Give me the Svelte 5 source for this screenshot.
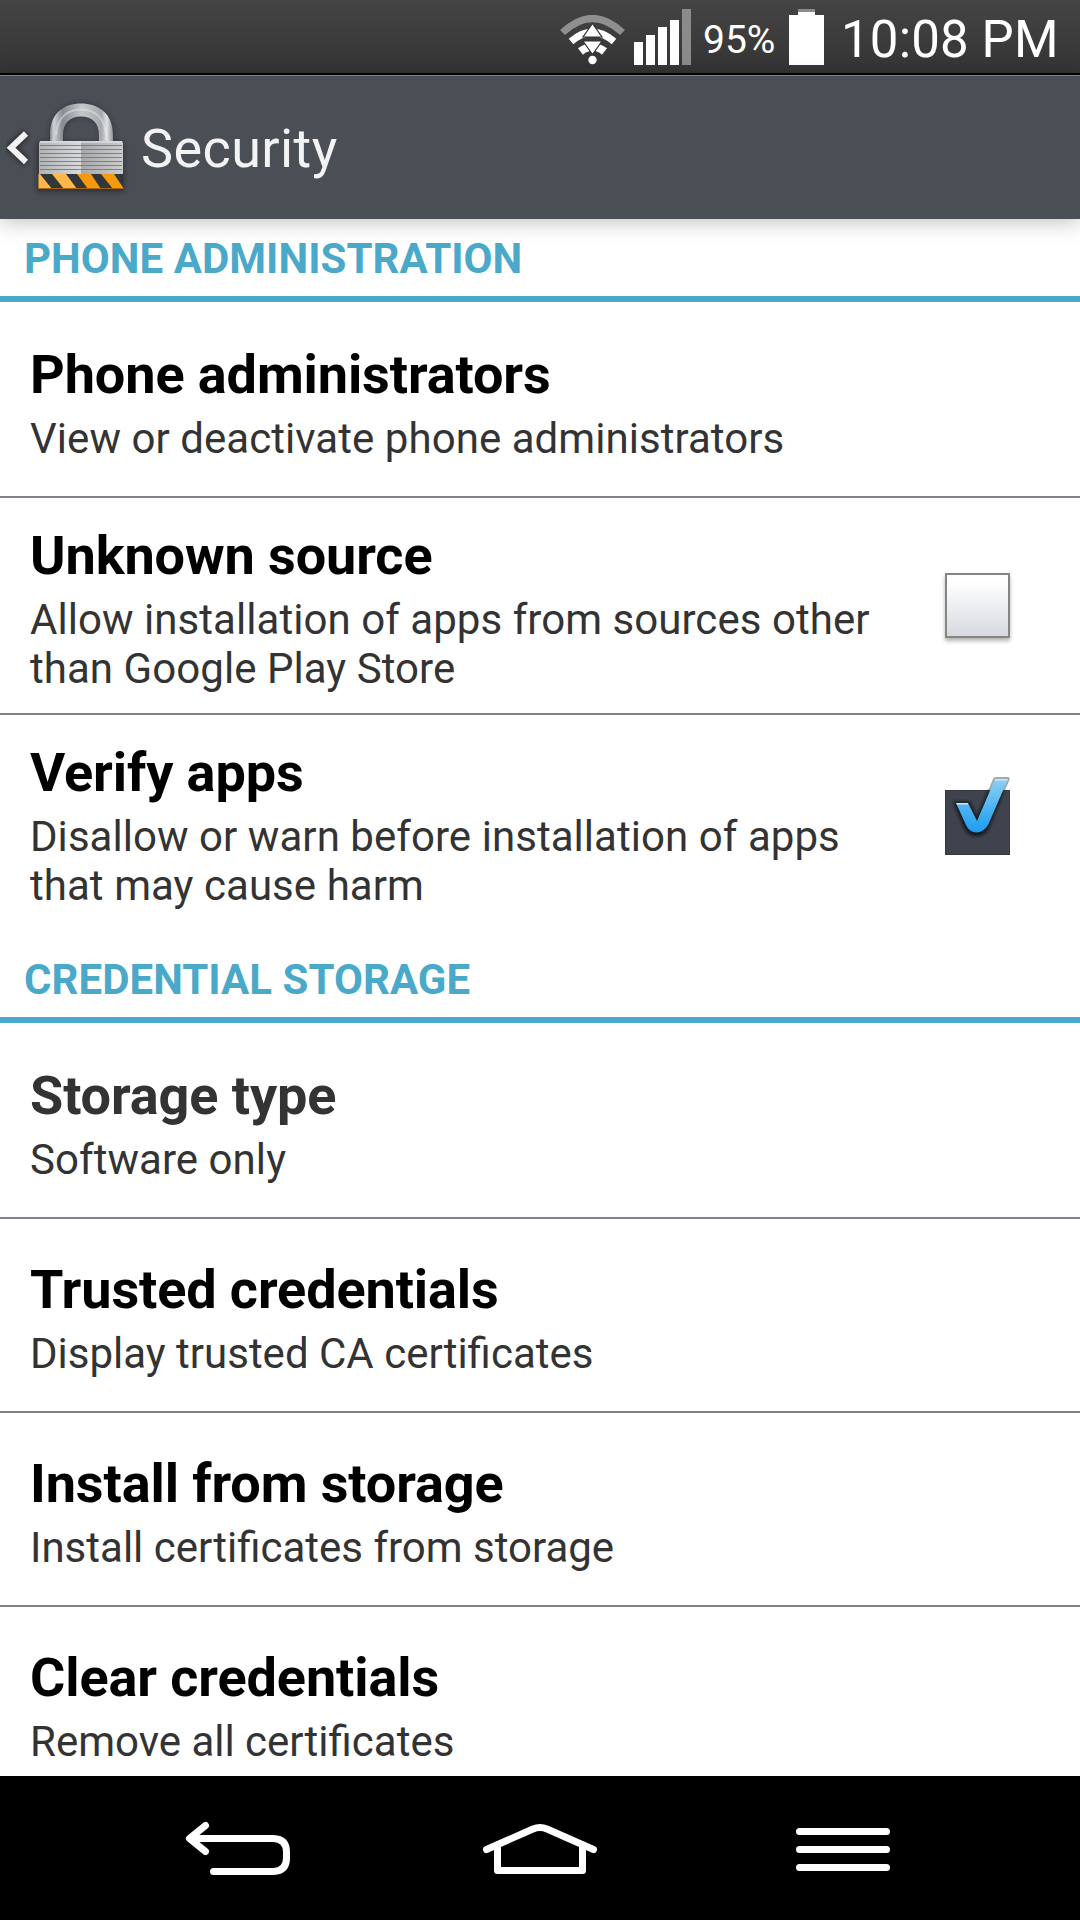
<script>
  const groups = [
    {
      heading: 'PHONE ADMINISTRATION',
      items: [
        { title: 'Phone administrators', lines: ['View or deactivate phone administrators'] },
        { title: 'Unknown source', lines: ['Allow installation of apps from sources other', 'than Google Play Store'], check: 'off' },
        { title: 'Verify apps', lines: ['Disallow or warn before installation of apps', 'that may cause harm'], check: 'on' }
      ]
    },
    {
      heading: 'CREDENTIAL STORAGE',
      items: [
        { title: 'Storage type', lines: ['Software only'], muted: true },
        { title: 'Trusted credentials', lines: ['Display trusted CA certificates'] },
        { title: 'Install from storage', lines: ['Install certificates from storage'] },
        { title: 'Clear credentials', lines: ['Remove all certificates'] }
      ]
    }
  ];

  // Letter-spacing switches ligatures off, so lines with "fi" keep the default spacing.
  const hasLigature = (line) => line.includes('fi');
</script>

<div class="screen">
  <div class="status">
    <svg class="wifi" width="66" height="50" viewBox="0 0 66 50" fill="none">
      <path d="M3.500 17.500Q33.500 -10.500 63.500 17.500" stroke="#8f8f8f" stroke-width="7" />
      <path d="M12 26.500Q33.500 8 55 26.500" stroke="#fff" stroke-width="7" />
      <path d="M21.500 36.500Q33.500 27 45.500 36.500" stroke="#fff" stroke-width="8" />
      <path d="M33.500 8.500L43 22H24Z M24 26H43L33.500 39.500Z" fill="#fff" stroke="#333" stroke-width="1.200" />
      <path d="M26 24h15" stroke="#3b3b3b" stroke-width="3" />
      <circle cx="33.500" cy="45" r="4.200" fill="#fff" />
    </svg>
    <svg class="signal" width="57" height="56" viewBox="0 0 57 56" fill="#fff">
      <path d="M0 33h9v23H0zM12 26h9v30h-9zM24 18h9v38h-9zM36 11h9v45h-9z" />
      <path d="M48 0h9v56h-9z" fill="#8b8b8b" />
    </svg>
    <span class="percent">95%</span>
    <svg class="battery" width="35" height="56" viewBox="0 0 35 56">
      <path d="M9 0h17v3H9z" fill="#8b8b8b" />
      <path d="M9 3h17v3h9v50H0V6h9z" fill="#fff" />
    </svg>
    <span class="clock">10:08 PM</span>
  </div>

  <header>
    <svg width="130" height="144" viewBox="0 0 130 144">
      <defs>
        <linearGradient id="shackle" x1="0" x2="1">
          <stop offset="0" stop-color="#82878a" />
          <stop offset=".06" stop-color="#d0d3d6" />
          <stop offset=".14" stop-color="#a3a8ac" />
          <stop offset=".2" stop-color="#868b8f" />
          <stop offset=".5" stop-color="#c5c8cb" />
          <stop offset=".82" stop-color="#a5aaae" />
          <stop offset=".9" stop-color="#e2e4e6" />
          <stop offset="1" stop-color="#8d9296" />
        </linearGradient>
        <linearGradient id="bodyL" x1="0" x2="1"><stop offset="0" stop-color="#b1b2b4" /><stop offset="1" stop-color="#d9dadc" /></linearGradient>
        <linearGradient id="bodyR" x1="0" x2="1"><stop offset="0" stop-color="#a8a9ab" /><stop offset="1" stop-color="#cbccce" /></linearGradient>
        <clipPath id="band"><path d="M38.500 99H123.500v14.500H38.500z" /></clipPath>
        <filter id="soft" x="-30%" y="-30%" width="160%" height="160%"><feGaussianBlur stdDeviation="2" /></filter>
      </defs>
      <path d="M26 58.500L11 72.800L26 87" fill="none" stroke="#1e2024" stroke-width="9" opacity=".75" filter="url(#soft)" />
      <path d="M26 58.500L11 72.800L26 87" fill="none" stroke="#f3f3f3" stroke-width="6" />
      <path d="M37 67h87v50H37z" fill="#222" opacity=".6" filter="url(#soft)" />
      <path d="M56 68V60a25.500 25.500 0 0 1 51 0v8" fill="none" stroke="#25272b" stroke-width="15" opacity=".5" filter="url(#soft)" />
      <path d="M50 67V60C50 38 64 28.500 81 28.500S113 38 113 60V67H99V60C99 48 92 41.500 81 41.500S63 48 63 60V67Z" fill="url(#shackle)" />
      <path d="M56 60C57 43 67 34.500 81 34.500S105 43 106 60" fill="none" stroke="#e8eaec" stroke-width="2" opacity=".5" />
      <path d="M40 66h41v33H39V68z" fill="url(#bodyL)" />
      <path d="M81 66h41l1 2v31H81z" fill="url(#bodyR)" />
      <path d="M40 67h82" stroke="#dcddde" stroke-width="1.500" />
      <path d="M40 70.500h82M40 74.500h82M40 78.500h82M40 82.500h82M40 86.500h82M40 90.500h82M40 94.500h82" stroke="#6d6f71" stroke-width="1" opacity=".8" />
      <path d="M38.500 99H123.500v15H38.500z" fill="#34373a" />
      <g clip-path="url(#band)">
        <path d="M38 99h2l12 15H38zM52 99h14l11 15H64z" fill="#ffb74a" />
        <path d="M77 99h14l10 15H88zM101 99h13l10 15h-11z" fill="#f59a0c" />
      </g>
      <path d="M38 113.500H123.500" stroke="#a8640c" stroke-width="1.200" />
    </svg>
    <h1>Security</h1>
  </header>

  <main>
    {#each groups as group}
      <section>
        <h2>{group.heading}</h2>
        {#each group.items as item}
          <div class="item" class:double={item.lines.length > 1}>
            <div class="text">
              <h3 class:muted={item.muted}>{item.title}</h3>
              {#each item.lines as line}<p class:loose={!hasLigature(line)}>{line}</p>{/each}
            </div>
            {#if item.check === 'off'}
              <span class="box"></span>
            {:else if item.check === 'on'}
              <svg class="checked" width="75" height="105" viewBox="0 0 75 105">
                <defs>
                  <linearGradient id="tick" x1="0" y1="0" x2="0" y2="1"><stop offset="0" stop-color="#8fd0f5" /><stop offset=".55" stop-color="#4bb3f1" /><stop offset="1" stop-color="#1d9df0" /></linearGradient>
                  <filter id="glow"><feGaussianBlur stdDeviation="1.500" /></filter>
                </defs>
                <path d="M5 20h65v65H5z" fill="#3e434e" />
                <path d="M5.500 20.500h64v64h-64z" fill="none" stroke="#343841" />
                <path d="M15 33H29L37 50L49 22H62L48 57Q44 65 36 65Q29 65 25 57Z" fill="#171a20" stroke="#171a20" stroke-width="3" filter="url(#glow)" />
                <path d="M48.500 20L53 9Q54 7 56 7H68.500Q70.500 8 69.500 10L65 20Z" fill="#a5a8aa" />
                <path d="M16 33H28L37 51L55 9H68L48.500 54Q44 62.500 36 62.500Q29 62 26 55Z" fill="url(#tick)" />
                <path d="M16.500 33.700H28M55 9.700H67.500" stroke="#cdeafa" stroke-width="1.500" />
              </svg>
            {/if}
          </div>
        {/each}
      </section>
    {/each}
  </main>

  <nav>
    <svg width="1080" height="144" viewBox="0 0 1080 144" fill="none" stroke="#fff" stroke-width="7" stroke-linecap="round" stroke-linejoin="round">
      <path d="M205.500 49.500L189.500 62.500L205.500 75.500M190 62.500H273.500Q286.500 63 286.500 76V82Q286.500 95 273.500 95.500H213.500" />
      <path d="M486.500 73.500L533 53Q540 50 547 53L593.500 73.500M497.500 70V94.500H582.500V70" />
      <path d="M799.500 55.500H886.500M799.500 73.500H886.500M799.500 91.500H886.500" />
    </svg>
  </nav>
</div>

<style>
  :global(body) { margin: 0; }
  .screen {
    width: 1080px; height: 1920px; overflow: hidden;
    display: flex; flex-direction: column;
    background: #fff; font-family: Roboto, sans-serif;
  }
  svg { display: block; flex: none; }
  h1, h2, h3, p { margin: 0; font-weight: 400; white-space: nowrap; }
  .status {
    height: 73px; flex: none; display: flex; align-items: flex-start;
    background: linear-gradient(#444, #343434); border-bottom: 2px solid #000; color: #fff;
  }
  .wifi { margin: 15px 0 0 559px; }
  .signal { margin: 9px 0 0 9px; }
  .percent { width: 76px; margin-left: 12px; font-size: 39px; line-height: 80px; white-space: nowrap; }
  .battery { margin: 9px 0 0 10px; }
  .clock { margin-left: 17px; font-size: 51px; line-height: 80px; letter-spacing: .15px; white-space: nowrap; }
  header {
    height: 144px; flex: none; box-sizing: border-box; display: flex;
    background: #4a4e55; box-shadow: inset 0 1px #7a7e85, 0 3px 20px rgba(0,0,0,.25);
    position: relative;
  }
  header svg { margin-right: 11px; }
  h1 { color: #f3f3f3; font-size: 54px; line-height: 148px; letter-spacing: .4px; }
  main { height: 1557px; flex: none; overflow: hidden; }
  h2 {
    box-sizing: border-box; height: 83px; padding-left: 24px; border-bottom: 6px solid #4aa9c9;
    color: #4aa9c9; font-size: 42px; font-weight: 700; line-height: 80px; letter-spacing: .05px;
  }
  .item {
    box-sizing: border-box; height: 194px; padding: 0 65px 0 30px; display: flex; align-items: center;
    justify-content: space-between; border-bottom: 2px solid #7d828a;
  }
  .text { align-self: flex-start; padding-top: 39px; }
  .item:nth-child(2) { height: 196px; }
  .item:nth-child(2) .text { padding-top: 41px; }
  .item.double { height: 217px; }
  .item.double .text { padding-top: 26px; }
  .item:last-child { border-bottom-color: transparent; margin-bottom: 8px; }
  h3 { color: #000; font-size: 54px; font-weight: 700; line-height: 63px; letter-spacing: -.1px; margin-bottom: 8px; }
  h3.muted { color: #333; }
  p { color: #333; font-size: 42px; line-height: 49px; }
  p.loose { letter-spacing: .05px; }
  .box {
    box-sizing: border-box; width: 65px; height: 65px; border: 2px solid #858585; margin-right: 5px;
    background: linear-gradient(#fff 10%, #d6dae0); box-shadow: 0 3px 4px rgba(0,0,0,.3);
  }
  nav { height: 144px; flex: none; background: #000; }
</style>
